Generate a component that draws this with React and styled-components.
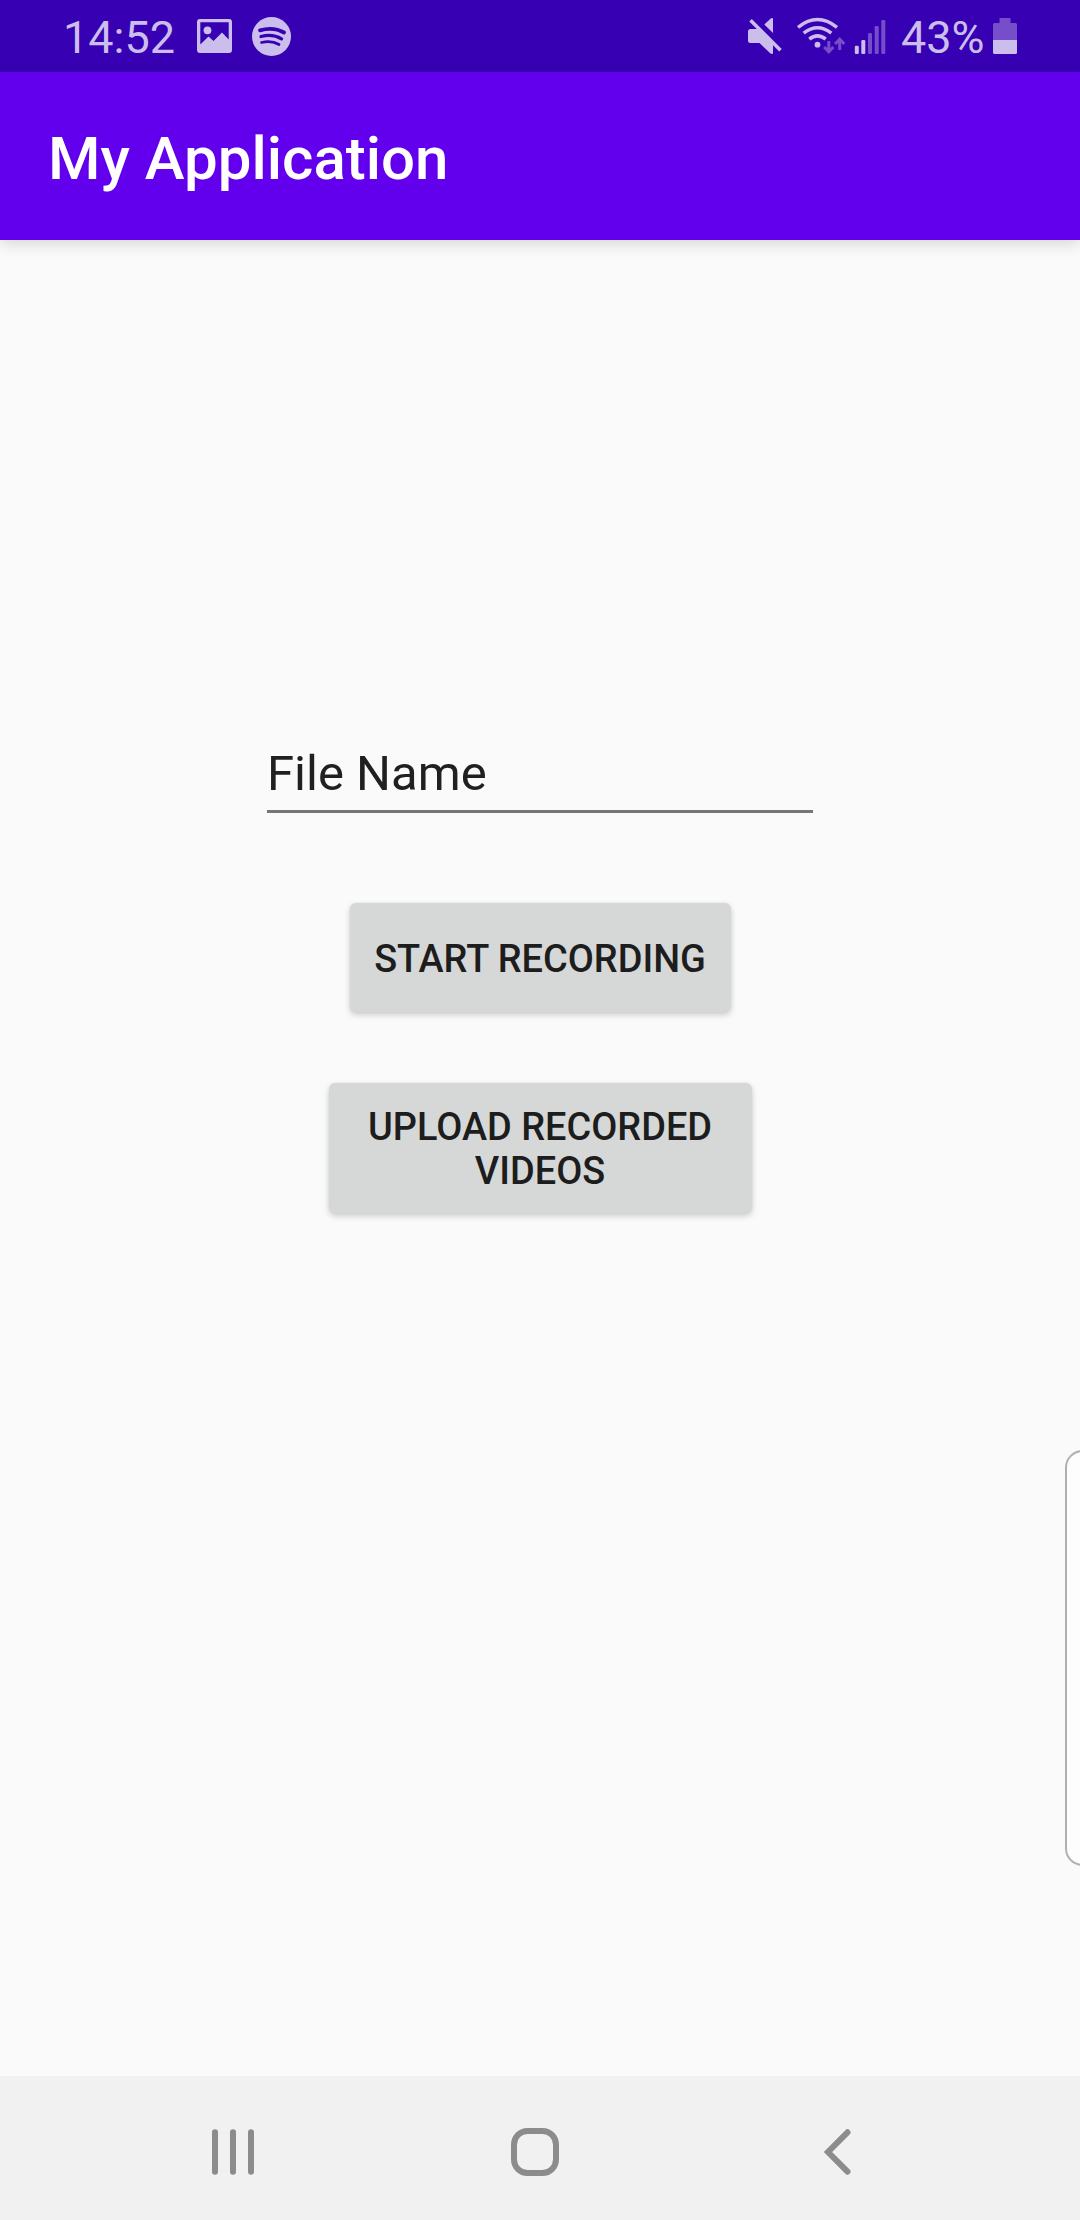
import React from "react";
import styled, { createGlobalStyle } from "styled-components";

const GlobalStyle = createGlobalStyle`
  *, *::before, *::after { box-sizing: border-box; }
  html, body { margin: 0; padding: 0; background: #fafafa; }
  body { font-family: Roboto, "Noto Sans", sans-serif; }
`;

const LIGHT = "#cbbdec";
const FADED = "#764ec9";

const Screen = styled.div`
  position: relative;
  display: flex;
  flex-direction: column;
  width: 1080px;
  height: 2220px;
  background: #fafafa;
  overflow: hidden;
`;

const StatusBar = styled.header`
  display: flex;
  flex: none;
  align-items: flex-start;
  justify-content: space-between;
  height: 72px;
  padding: 0 63px 0 63px;
  background: #3700b3;
  color: ${LIGHT};
`;

const StatusGroup = styled.div`
  display: flex;
  align-items: flex-start;
  height: 72px;
`;

const StatusText = styled.span`
  width: ${(p) => p.$width}px;
  padding-top: 11px;
  padding-left: ${(p) => p.$inset || 0}px;
  font-size: 45px;
  line-height: 53px;
  white-space: nowrap;
`;

const StatusIcon = styled.svg`
  display: block;
  flex: none;
  height: 72px;
`;

const AppBar = styled.div`
  display: flex;
  flex: none;
  align-items: center;
  height: 168px;
  padding: 5px 48px 0;
  background: #6200ee;
  box-shadow: 0 4px 14px rgba(0, 0, 0, 0.14);
`;

const Title = styled.h1`
  margin: 0;
  color: #fff;
  font-size: 60px;
  font-weight: 500;
  line-height: 70px;
`;

const Content = styled.main`
  display: flex;
  flex: 1;
  flex-direction: column;
  align-items: center;
  padding-top: 503px;
`;

const FileName = styled.input`
  display: block;
  width: 546px;
  height: 70px;
  margin: 0 0 90px;
  padding: 0 0 7px;
  border: 0;
  border-bottom: 3px solid #757575;
  border-radius: 0;
  outline: 0;
  background: transparent;
  color: #202020;
  font: 400 49px/60px Roboto, sans-serif;
`;

const Button = styled.button`
  display: flex;
  align-items: center;
  justify-content: center;
  width: ${(p) => p.$width}px;
  height: ${(p) => p.$height}px;
  margin: 0 0 71px;
  padding: 2px 30px 0;
  border: 0;
  border-radius: 6px;
  background: #d6d8d7;
  box-shadow: 0 3px 6px rgba(0, 0, 0, 0.18), 0 0 3px rgba(0, 0, 0, 0.06);
  color: #1d1d1d;
  font: 500 37.9px/44px Roboto, sans-serif;
  text-align: center;
  text-transform: uppercase;
  white-space: ${(p) => (p.$wrap ? "normal" : "nowrap")};
`;

const EdgePanel = styled.aside`
  position: absolute;
  top: 1450px;
  right: -20px;
  width: 35px;
  height: 416px;
  border: 2px solid #b0b0b0;
  border-radius: 19px;
  background: #fdfdfd;
`;

const NavBar = styled.nav`
  display: flex;
  flex: none;
  align-items: center;
  height: 144px;
  padding: 8px 0 0 203px;
  gap: 242px;
  background: #f1f1f1;
`;

const NavIcon = styled.svg`
  display: block;
  width: 60px;
  height: 60px;
  fill: none;
  stroke: #8c8c8c;
  stroke-width: 6;
  stroke-linecap: round;
`;

function NotificationIcons() {
  return (
    <StatusIcon width="106" viewBox="190 0 106 72">
      <path
        fill={LIGHT}
        fillRule="evenodd"
        d="M200 19H229Q232 19 232 22V50Q232 53 229 53H200Q197 53 197 50V22Q197 19 200 19ZM200.300 22.300V44.500L208.500 36.500L213.500 41L222 32.500L228.700 39.500V22.300Z"
      />
      <circle cx="207.500" cy="30.300" r="3.900" fill={LIGHT} />
      <circle cx="271.500" cy="36.500" r="19.500" fill={LIGHT} />
      <g fill="none" stroke="#3700b3" strokeLinecap="round">
        <path strokeWidth="3.800" d="M260 30.300Q273.500 26.500 284 32.500" />
        <path strokeWidth="3.300" d="M261 36.500Q272.500 33.300 281.500 38.800" />
        <path strokeWidth="2.700" d="M261.500 42.500Q271.500 40 279 44.500" />
      </g>
    </StatusIcon>
  );
}

function ConnectionIcons() {
  const bars = [
    [854.8, 45.7, LIGHT],
    [861.3, 40, LIGHT],
    [868, 33, FADED],
    [874.7, 26, FADED],
    [881.3, 20, FADED],
  ];
  return (
    <StatusIcon width="150" viewBox="740 0 150 72">
      <path
        fill={LIGHT}
        d="M750.500 29H758.500L782 51L773 43V53Q773 54 772 54L770.500 53.500L759.500 43H750.500Q748 43 748 40.500V31.500Q748 29 750.500 29ZM764.300 24.500L771 18.300Q773 17.200 773 19V33Z"
      />
      <path fill="none" stroke="#3700b3" strokeWidth="3" d="M752 16.500L786 50.500" />
      <path fill="none" stroke={LIGHT} strokeWidth="3.600" d="M750.500 20.300L780.500 50.300" />
      <g fill="none" stroke={LIGHT} strokeWidth="3.500">
        <path d="M798 27.300Q817.500 11.800 837 27.300" />
        <path d="M803.700 33.200Q817.500 22.300 831.300 33.200" />
        <path d="M809.300 39.200Q817.500 32.600 825.700 39.200" />
      </g>
      <circle cx="817.500" cy="44.700" r="2.900" fill={LIGHT} />
      <g fill="none" stroke={FADED} strokeWidth="3">
        <path d="M828.800 41V51.500M824.200 47L828.800 51.800L833.400 47" />
        <path d="M839.700 50V39.500M835.100 44L839.700 39.200L844.300 44" />
      </g>
      {bars.map(([x, y, fill]) => (
        <rect key={x} x={x} y={y} width="4" height={54 - y} rx="1.200" fill={fill} />
      ))}
    </StatusIcon>
  );
}

function BatteryIcon() {
  return (
    <StatusIcon width="24" viewBox="993 0 24 72">
      <path fill={FADED} d="M999.500 18H1010.500V23H1015.500Q1017 23 1017 24.500V40H993V24.500Q993 23 994.500 23H999.500Z" />
      <path fill={LIGHT} d="M993 40H1017V52.500Q1017 54 1015.500 54H994.500Q993 54 993 52.500Z" />
    </StatusIcon>
  );
}

export default function App() {
  return (
    <>
      <GlobalStyle />
      <Screen>
        <StatusBar>
          <StatusGroup>
            <StatusText $width={127}>14:52</StatusText>
            <NotificationIcons />
          </StatusGroup>
          <StatusGroup>
            <ConnectionIcons />
            <StatusText $width={103} $inset={11}>43%</StatusText>
            <BatteryIcon />
          </StatusGroup>
        </StatusBar>
        <AppBar>
          <Title>My Application</Title>
        </AppBar>
        <Content>
          <FileName type="text" defaultValue="File Name" aria-label="File name" />
          <Button $width={381} $height={109}>Start Recording</Button>
          <Button $width={423} $height={130} $wrap>Upload Recorded Videos</Button>
        </Content>
        <EdgePanel />
        <NavBar>
          <NavIcon viewBox="203 2122 60 60">
            <path d="M215 2132.300V2171.700M233 2132.300V2171.700M251 2132.300V2171.700" />
          </NavIcon>
          <NavIcon viewBox="505 2122 60 60">
            <rect x="514" y="2131" width="42" height="42" rx="13.500" />
          </NavIcon>
          <NavIcon viewBox="807 2122 60 60">
            <path d="M847.500 2132.300L828 2152L847.500 2171.700" />
          </NavIcon>
        </NavBar>
      </Screen>
    </>
  );
}
